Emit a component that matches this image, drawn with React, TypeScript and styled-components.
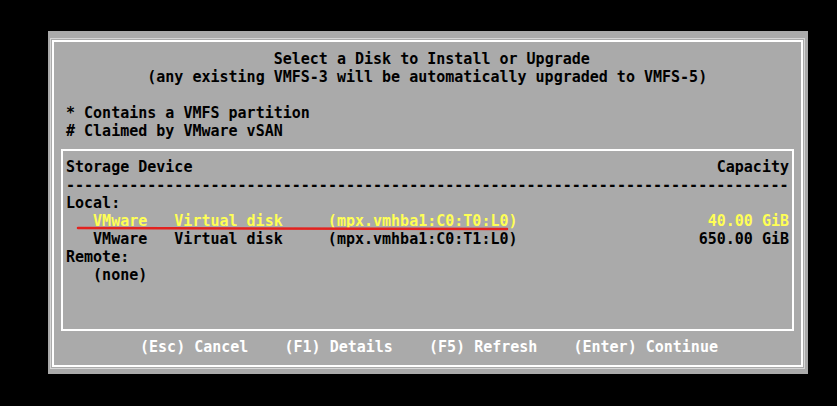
import React from "react";
import styled, { createGlobalStyle } from "styled-components";

const Global = createGlobalStyle`
  html, body { margin: 0; padding: 0; background: #000; }
  body { width: 837px; height: 406px; overflow: hidden; }
`;

const Screen = styled.div`
  width: 837px;
  height: 406px;
  box-sizing: border-box;
  background: #000;
  padding: 31px 0 0 48px;
  font-family: "DejaVu Sans Mono", "Liberation Mono", monospace;
  font-weight: bold;
  font-size: 15px;
  line-height: 20px;
  color: #000;
`;

const Dialog = styled.div`
  position: relative;
  width: 760px;
  height: 343px;
  box-sizing: border-box;
  background: #aaaaaa;
  padding: 7px 3px 5px 2px;
`;

const Frame = styled.div`
  height: 100%;
  box-sizing: border-box;
  border: 1px solid #d6d6d6;
  padding: 1px;
`;

const FrameInner = styled.div`
  height: 100%;
  box-sizing: border-box;
  border: 2px solid #ffffff;
  padding: 7px 7px 0 7px;
  display: flex;
  flex-direction: column;
`;

const Header = styled.div`
  display: flex;
  flex-direction: column;
  padding-left: 5px;
`;

const Line = styled.div<{ $indent?: number; $color?: string }>`
  height: 18px;
  white-space: pre;
  padding-left: ${(p) => (p.$indent ?? 0)}ch;
  color: ${(p) => p.$color ?? "inherit"};
`;

const TableBox = styled.div`
  margin-top: 10px;
  height: 182px;
  box-sizing: border-box;
  border: 2px solid #ffffff;
  padding: 6px 3px 10px 3px;
  display: flex;
  flex-direction: column;
`;

const HeadRow = styled.div`
  height: 18px;
  display: flex;
  justify-content: space-between;
  white-space: pre;
`;

const DiskRow = styled.div<{ $selected?: boolean }>`
  height: 18px;
  display: grid;
  grid-template-columns: 3ch 9ch 17ch auto 1fr;
  white-space: pre;
  color: ${(p) => (p.$selected ? "#ffff55" : "#000")};
`;

const Cell = styled.span<{ $right?: boolean }>`
  text-align: ${(p) => (p.$right ? "right" : "left")};
`;

const Keys = styled.div`
  margin-top: 6px;
  height: 18px;
  display: flex;
  justify-content: center;
  gap: 4ch;
  padding-left: 3px;
  color: #ffffff;
  white-space: pre;
`;

const Mark = styled.svg`
  position: absolute;
  left: 28px;
  top: 193px;
  overflow: visible;
`;

const disks = [
  { vendor: "VMware", model: "Virtual disk", path: "(mpx.vmhba1:C0:T0:L0)", cap: "40.00 GiB", selected: true },
  { vendor: "VMware", model: "Virtual disk", path: "(mpx.vmhba1:C0:T1:L0)", cap: "650.00 GiB", selected: false },
];

export default function App() {
  return (
    <>
      <Global />
      <Screen>
        <Dialog>
          <Frame>
            <FrameInner>
              <Header>
                <Line $indent={23}>Select a Disk to Install or Upgrade</Line>
                <Line $indent={9}>(any existing VMFS-3 will be automatically upgraded to VMFS-5)</Line>
                <Line />
                <Line>* Contains a VMFS partition</Line>
                <Line># Claimed by VMware vSAN</Line>
              </Header>
              <TableBox>
                <HeadRow>
                  <span>Storage Device</span>
                  <span>Capacity</span>
                </HeadRow>
                <Line>{"-".repeat(80)}</Line>
                <Line>Local:</Line>
                {disks.map((d) => (
                  <DiskRow key={d.path} $selected={d.selected}>
                    <Cell />
                    <Cell>{d.vendor}</Cell>
                    <Cell>{d.model}</Cell>
                    <Cell>{d.path}</Cell>
                    <Cell $right>{d.cap}</Cell>
                  </DiskRow>
                ))}
                <Line>Remote:</Line>
                <Line $indent={3}>(none)</Line>
              </TableBox>
              <Keys>
                <span>(Esc) Cancel</span>
                <span>(F1) Details</span>
                <span>(F5) Refresh</span>
                <span>(Enter) Continue</span>
              </Keys>
            </FrameInner>
          </Frame>
          <Mark width="434" height="8" viewBox="0 0 434 8">
            <line x1="2" y1="4" x2="431" y2="5" stroke="#e3221f" strokeWidth="2.5" strokeLinecap="round" />
          </Mark>
        </Dialog>
      </Screen>
    </>
  );
}
